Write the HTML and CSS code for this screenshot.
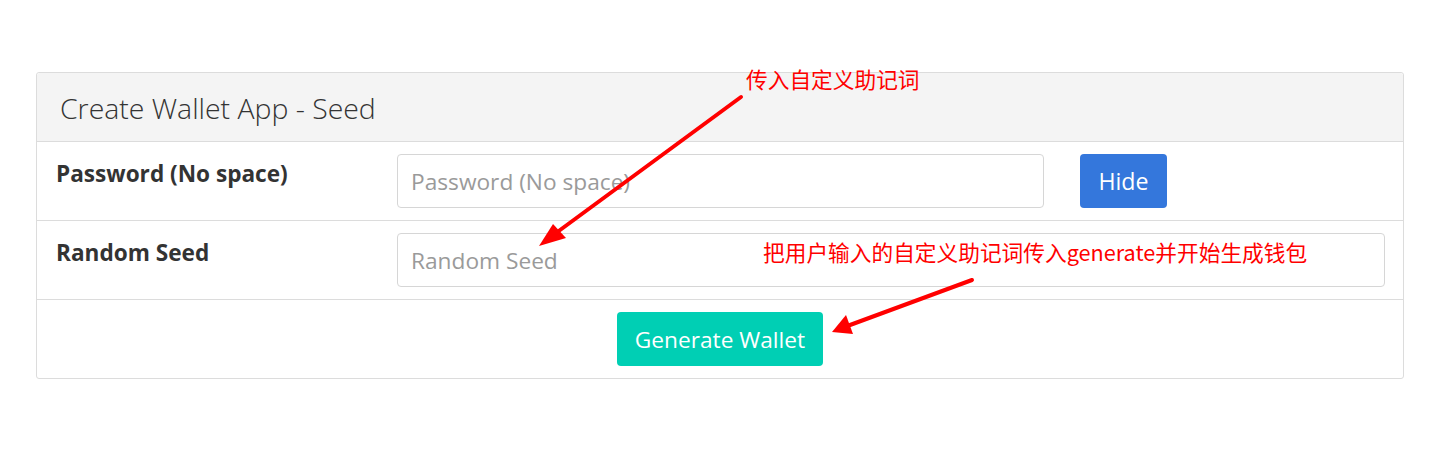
FILE: index.html
```html
<!DOCTYPE html>
<html>
<head>
<meta charset="utf-8">
<link rel="stylesheet" href="styles.css">
</head>
<body>
<div class="page">
  <div class="panel">
    <div class="panel-heading">Create Wallet App - Seed</div>
    <div class="row">
      <div class="label">Password (No space)</div>
      <div class="field">
        <input class="input input-pw" type="text" placeholder="Password (No space)">
        <button class="btn btn-blue">Hide</button>
      </div>
    </div>
    <div class="row">
      <div class="label">Random Seed</div>
      <div class="field">
        <input class="input input-seed" type="text" placeholder="Random Seed">
      </div>
    </div>
    <div class="row row-center">
      <button class="btn btn-green">Generate Wallet</button>
    </div>
  </div>
  <div class="note note-1">传入自定义助记词</div>
  <div class="note note-2">把用户输入的自定义助记词传入generate并开始生成钱包</div>
  <svg class="arrows" width="1440" height="451" viewBox="0 0 1440 451">
    <line x1="741" y1="97" x2="556" y2="233" stroke="#ff0000" stroke-width="4" stroke-linecap="round"/>
    <polygon points="539,246 553,224 566,238" fill="#ff0000"/>
    <line x1="972" y1="280" x2="850" y2="325" stroke="#ff0000" stroke-width="4" stroke-linecap="round"/>
    <polygon points="832,332 846,315 853,334" fill="#ff0000"/>
  </svg>
</div>
</body>
</html>
```
FILE: styles.css
```css
html, body {
  margin: 0;
  padding: 0;
  background: #fff;
}
.page {
  position: relative;
  width: 1440px;
  height: 451px;
  padding: 72px 36px 0 36px;
  box-sizing: border-box;
  font-family: "Open Sans", "Noto Sans", sans-serif;
  color: #333;
}
.panel {
  border: 1px solid #dcdcdc;
  border-radius: 3px;
  background: #fff;
}
.panel-heading {
  background: #f4f4f4;
  height: 69px;
  box-sizing: border-box;
  padding: 16px 23px 0 23px;
  font-size: 28.4px;
  line-height: 1.362;
  font-weight: 300;
  color: #333;
  border-bottom: 1px solid #dcdcdc;
  border-radius: 3px 3px 0 0;
}
.row {
  display: flex;
  align-items: flex-start;
  height: 79px;
  box-sizing: border-box;
  padding: 12px 18px 0 19px;
  border-bottom: 1px solid #dcdcdc;
}
.row:last-child {
  border-bottom: none;
  height: 78px;
}
.row-center {
  justify-content: center;
  padding-left: 0;
  padding-right: 0;
}
.label {
  width: 341px;
  flex: none;
  font-weight: 700;
  font-size: 22.6px;
  line-height: 1.362;
  padding-top: 5px;
  color: #333;
}
.field {
  display: flex;
  flex: 1;
  align-items: flex-start;
}
.input {
  box-sizing: border-box;
  height: 54px;
  border: 1px solid #d6d6d6;
  border-radius: 4px;
  padding: 0 13px;
  font-family: "Open Sans", "Noto Sans", sans-serif;
  font-size: 22.7px;
  color: #333;
  background: #fff;
  outline: none;
}
.input::placeholder {
  color: #9a9a9a;
}
.input-pw {
  width: 647px;
}
.input-seed {
  width: 988px;
}
.btn {
  box-sizing: border-box;
  height: 54px;
  border: none;
  border-radius: 4px;
  color: #fff;
  font-family: "Open Sans", "Noto Sans", sans-serif;
  font-size: 22.7px;
  padding: 0;
  cursor: pointer;
}
.btn-blue {
  width: 87px;
  margin-left: 36px;
  background: #3477dc;
  font-size: 23.2px;
}
.btn-green {
  width: 206px;
  background: #00cfb4;
}
.note {
  position: absolute;
  color: #ff0000;
  font-family: "Noto Sans CJK SC", "Noto Sans", sans-serif;
  font-size: 21.7px;
  line-height: 26px;
  white-space: nowrap;
}
.note-1 {
  left: 746px;
  top: 66px;
}
.note-2 {
  left: 763px;
  top: 239px;
}
.arrows {
  position: absolute;
  left: 0;
  top: 0;
  pointer-events: none;
}
```
